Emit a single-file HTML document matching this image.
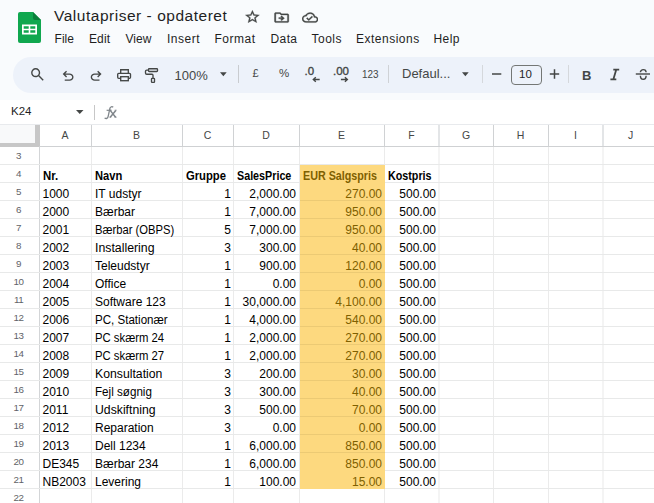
<!DOCTYPE html>
<html><head><meta charset="utf-8"><style>
*{margin:0;padding:0;box-sizing:border-box}
html,body{width:654px;height:503px;overflow:hidden;background:#f9fbfd;font-family:"Liberation Sans",sans-serif;position:relative}
.a{position:absolute;white-space:nowrap}
.t{position:absolute;white-space:nowrap;line-height:1}
.menu{font-size:12px;color:#1f1f1f;top:33px}
.ico{position:absolute}
.hl{position:absolute;height:1px}
.vl{position:absolute;width:1px}
.rn{position:absolute;font-size:9.8px;letter-spacing:-0.5px;color:#5f6368;width:37px;text-align:center;line-height:1}
.ch{position:absolute;font-size:10.5px;color:#444746;text-align:center;line-height:1}
.c{position:absolute;font-size:12px;color:#000;line-height:1}
.b{font-weight:bold;transform-origin:0 0}
.r{text-align:right}
</style></head><body>

<svg class="ico" style="left:18px;top:12px" width="23" height="31" viewBox="0 0 23 31">
<path d="M2 0H15L23 8V29A2 2 0 0 1 21 31H2A2 2 0 0 1 0 29V2A2 2 0 0 1 2 0Z" fill="#10a74f"/>
<path d="M15 0L23 8H17A2 2 0 0 1 15 6Z" fill="#0b7f3b"/>
<path d="M4 12.5H19V22.5H4Z M5.7 14.2V16.7H10.7V14.2Z M12.3 14.2V16.7H17.3V14.2Z M5.7 18.3V20.8H10.7V18.3Z M12.3 18.3V20.8H17.3V18.3Z" fill="#fff" fill-rule="evenodd"/>
</svg>
<div class="t" style="left:54px;top:7.5px;font-size:15.5px;letter-spacing:0.52px;color:#1f1f1f">Valutapriser - opdateret</div>
<div class="t menu" style="left:54.5px;letter-spacing:0.05px">File</div>
<div class="t menu" style="left:89px;letter-spacing:0.1px">Edit</div>
<div class="t menu" style="left:125.5px;letter-spacing:0.05px">View</div>
<div class="t menu" style="left:167px;letter-spacing:0.5px">Insert</div>
<div class="t menu" style="left:214.5px;letter-spacing:0.5px">Format</div>
<div class="t menu" style="left:270.5px;letter-spacing:0.4px">Data</div>
<div class="t menu" style="left:311.5px;letter-spacing:0.5px">Tools</div>
<div class="t menu" style="left:356px;letter-spacing:0.5px">Extensions</div>
<div class="t menu" style="left:433.5px;letter-spacing:0.4px">Help</div>
<div class="a" style="left:13px;top:57px;width:700px;height:36px;border-radius:18px;background:#edf2fa"></div>
<div class="a" style="left:0;top:100px;width:654px;height:403px;background:#fff"></div>
<div class="t" style="left:11px;top:106px;font-size:11.5px;color:#1f1f1f">K24</div>
<svg class="ico" style="left:76px;top:110px" width="8" height="5"><path d="M0 0H7.5L3.75 4Z" fill="#444746"/></svg>
<div class="a" style="left:93.5px;top:105px;width:1px;height:15px;background:#c7c7c7"></div>
<svg class="ico" style="left:0;top:100px" width="130" height="24" viewBox="0 100 130 24" fill="none" stroke="#80868b"><path d="M113.2 107.3C112.2 106.3 110.4 106.6 109.9 108.3L108.1 116.6C107.7 118.5 106.2 119 104.6 118" stroke-width="1.3"/><path d="M106.6 110.3H111.3" stroke-width="1.2"/><path d="M110.2 110.4L115.6 117.2M115.8 110.4L110.2 117.2" stroke-width="1.5"/><path d="M109.6 110.2H111.4M114.7 110.2H116.6M109.4 117.2H111.2M114.6 117.2H116.6" stroke-width="0.9"/></svg>
<div class="hl" style="left:0;top:124px;width:654px;background:#e8eaed"></div>
<div class="a" style="left:0;top:125px;width:35px;height:18px;background:#f8f9fa"></div>
<div class="a" style="left:35px;top:125px;width:5px;height:22px;background:#c7c7c7"></div>
<div class="a" style="left:0;top:143px;width:40px;height:4px;background:#c7c7c7"></div>
<div class="vl" style="left:91px;top:125px;height:21px;background:#d0d2d4"></div>
<div class="vl" style="left:91px;top:147px;height:356px;background:#ebebeb"></div>
<div class="vl" style="left:182px;top:125px;height:21px;background:#d0d2d4"></div>
<div class="vl" style="left:182px;top:147px;height:356px;background:#ebebeb"></div>
<div class="vl" style="left:233px;top:125px;height:21px;background:#d0d2d4"></div>
<div class="vl" style="left:233px;top:147px;height:356px;background:#ebebeb"></div>
<div class="vl" style="left:299px;top:125px;height:21px;background:#d0d2d4"></div>
<div class="vl" style="left:299px;top:147px;height:356px;background:#ebebeb"></div>
<div class="vl" style="left:384px;top:125px;height:21px;background:#d0d2d4"></div>
<div class="vl" style="left:384px;top:147px;height:356px;background:#ebebeb"></div>
<div class="a" style="left:438px;top:125px;width:2px;height:21px;background:#e3e5e7"></div>
<div class="a" style="left:438px;top:147px;width:2px;height:356px;background:#f4f4f4"></div>
<div class="vl" style="left:493px;top:125px;height:21px;background:#d0d2d4"></div>
<div class="vl" style="left:493px;top:147px;height:356px;background:#ebebeb"></div>
<div class="vl" style="left:548px;top:125px;height:21px;background:#d0d2d4"></div>
<div class="vl" style="left:548px;top:147px;height:356px;background:#ebebeb"></div>
<div class="a" style="left:602px;top:125px;width:2px;height:21px;background:#e3e5e7"></div>
<div class="a" style="left:602px;top:147px;width:2px;height:356px;background:#f4f4f4"></div>
<div class="vl" style="left:39px;top:147px;height:356px;background:#d3d5d7"></div>
<div class="hl" style="left:39px;top:146px;width:615px;background:#cfd1d3"></div>
<div class="hl" style="left:0;top:164px;width:654px;background:#e8e9e9"></div>
<div class="hl" style="left:0;top:182px;width:654px;background:#e8e9e9"></div>
<div class="hl" style="left:0;top:200px;width:654px;background:#e8e9e9"></div>
<div class="hl" style="left:0;top:218px;width:654px;background:#e8e9e9"></div>
<div class="hl" style="left:0;top:236px;width:654px;background:#e8e9e9"></div>
<div class="hl" style="left:0;top:254px;width:654px;background:#e8e9e9"></div>
<div class="hl" style="left:0;top:272px;width:654px;background:#e8e9e9"></div>
<div class="hl" style="left:0;top:290px;width:654px;background:#e8e9e9"></div>
<div class="hl" style="left:0;top:308px;width:654px;background:#e8e9e9"></div>
<div class="hl" style="left:0;top:326px;width:654px;background:#e8e9e9"></div>
<div class="hl" style="left:0;top:344px;width:654px;background:#e8e9e9"></div>
<div class="hl" style="left:0;top:362px;width:654px;background:#e8e9e9"></div>
<div class="hl" style="left:0;top:380px;width:654px;background:#e8e9e9"></div>
<div class="hl" style="left:0;top:398px;width:654px;background:#e8e9e9"></div>
<div class="hl" style="left:0;top:416px;width:654px;background:#e8e9e9"></div>
<div class="hl" style="left:0;top:434px;width:654px;background:#e8e9e9"></div>
<div class="hl" style="left:0;top:452px;width:654px;background:#e8e9e9"></div>
<div class="hl" style="left:0;top:470px;width:654px;background:#e8e9e9"></div>
<div class="hl" style="left:0;top:488px;width:654px;background:#e8e9e9"></div>
<div class="a" style="left:300px;top:165px;width:85px;height:324px;background:#fdd97f"></div>
<div class="hl" style="left:300px;top:200px;width:85px;background:#ecca74"></div>
<div class="hl" style="left:300px;top:218px;width:85px;background:#ecca74"></div>
<div class="hl" style="left:300px;top:236px;width:85px;background:#ecca74"></div>
<div class="hl" style="left:300px;top:254px;width:85px;background:#ecca74"></div>
<div class="hl" style="left:300px;top:272px;width:85px;background:#ecca74"></div>
<div class="hl" style="left:300px;top:290px;width:85px;background:#ecca74"></div>
<div class="hl" style="left:300px;top:308px;width:85px;background:#ecca74"></div>
<div class="hl" style="left:300px;top:326px;width:85px;background:#ecca74"></div>
<div class="hl" style="left:300px;top:344px;width:85px;background:#ecca74"></div>
<div class="hl" style="left:300px;top:362px;width:85px;background:#ecca74"></div>
<div class="hl" style="left:300px;top:380px;width:85px;background:#ecca74"></div>
<div class="hl" style="left:300px;top:398px;width:85px;background:#ecca74"></div>
<div class="hl" style="left:300px;top:416px;width:85px;background:#ecca74"></div>
<div class="hl" style="left:300px;top:434px;width:85px;background:#ecca74"></div>
<div class="hl" style="left:300px;top:452px;width:85px;background:#ecca74"></div>
<div class="ch" style="left:39px;width:52px;top:130.4px">A</div>
<div class="ch" style="left:91px;width:91px;top:130.4px">B</div>
<div class="ch" style="left:182px;width:51px;top:130.4px">C</div>
<div class="ch" style="left:233px;width:66px;top:130.4px">D</div>
<div class="ch" style="left:299px;width:85px;top:130.4px">E</div>
<div class="ch" style="left:384px;width:55px;top:130.4px">F</div>
<div class="ch" style="left:439px;width:54px;top:130.4px">G</div>
<div class="ch" style="left:493px;width:55px;top:130.4px">H</div>
<div class="ch" style="left:548px;width:55px;top:130.4px">I</div>
<div class="ch" style="left:603px;width:55px;top:130.4px">J</div>
<div class="rn" style="left:0px;top:151.3px">3</div>
<div class="rn" style="left:0px;top:169.3px">4</div>
<div class="rn" style="left:0px;top:187.3px">5</div>
<div class="rn" style="left:0px;top:205.3px">6</div>
<div class="rn" style="left:0px;top:223.3px">7</div>
<div class="rn" style="left:0px;top:241.3px">8</div>
<div class="rn" style="left:0px;top:259.3px">9</div>
<div class="rn" style="left:0px;top:277.3px">10</div>
<div class="rn" style="left:0px;top:295.3px">11</div>
<div class="rn" style="left:0px;top:313.3px">12</div>
<div class="rn" style="left:0px;top:331.3px">13</div>
<div class="rn" style="left:0px;top:349.3px">14</div>
<div class="rn" style="left:0px;top:367.3px">15</div>
<div class="rn" style="left:0px;top:385.3px">16</div>
<div class="rn" style="left:0px;top:403.3px">17</div>
<div class="rn" style="left:0px;top:421.3px">18</div>
<div class="rn" style="left:0px;top:439.3px">19</div>
<div class="rn" style="left:0px;top:457.3px">20</div>
<div class="rn" style="left:0px;top:475.3px">21</div>
<div class="rn" style="left:0px;top:493.3px">22</div>
<div class="c b" style="left:42.5px;top:169.8px;color:#000;transform:scaleX(0.95)">Nr.</div>
<div class="c b" style="left:95px;top:169.8px;color:#000;transform:scaleX(0.93)">Navn</div>
<div class="c b" style="left:185.5px;top:169.8px;color:#000;transform:scaleX(0.937)">Gruppe</div>
<div class="c b" style="left:236.5px;top:169.8px;color:#000;transform:scaleX(0.895)">SalesPrice</div>
<div class="c b" style="left:302.5px;top:169.8px;color:#7f6000;transform:scaleX(0.895)">EUR Salgspris</div>
<div class="c b" style="left:388px;top:169.8px;color:#000;transform:scaleX(0.895)">Kostpris</div>
<div class="c" style="left:42.5px;top:187.7px">1000</div>
<div class="c" style="left:95px;top:187.7px">IT udstyr</div>
<div class="c r" style="right:423px;top:187.7px;color:#000">1</div>
<div class="c r" style="right:358px;top:187.7px;color:#000">2,000.00</div>
<div class="c r" style="right:272px;top:187.7px;color:#7f6000">270.00</div>
<div class="c r" style="right:218px;top:187.7px;color:#000">500.00</div>
<div class="c" style="left:42.5px;top:205.7px">2000</div>
<div class="c" style="left:95px;top:205.7px">Bærbar</div>
<div class="c r" style="right:423px;top:205.7px;color:#000">1</div>
<div class="c r" style="right:358px;top:205.7px;color:#000">7,000.00</div>
<div class="c r" style="right:272px;top:205.7px;color:#7f6000">950.00</div>
<div class="c r" style="right:218px;top:205.7px;color:#000">500.00</div>
<div class="c" style="left:42.5px;top:223.7px">2001</div>
<div class="c" style="left:95px;top:223.7px;transform:scaleX(0.935);transform-origin:0 0">Bærbar (OBPS)</div>
<div class="c r" style="right:423px;top:223.7px;color:#000">5</div>
<div class="c r" style="right:358px;top:223.7px;color:#000">7,000.00</div>
<div class="c r" style="right:272px;top:223.7px;color:#7f6000">950.00</div>
<div class="c r" style="right:218px;top:223.7px;color:#000">500.00</div>
<div class="c" style="left:42.5px;top:241.7px">2002</div>
<div class="c" style="left:95px;top:241.7px;transform:scaleX(1.026);transform-origin:0 0">Installering</div>
<div class="c r" style="right:423px;top:241.7px;color:#000">3</div>
<div class="c r" style="right:358px;top:241.7px;color:#000">300.00</div>
<div class="c r" style="right:272px;top:241.7px;color:#7f6000">40.00</div>
<div class="c r" style="right:218px;top:241.7px;color:#000">500.00</div>
<div class="c" style="left:42.5px;top:259.7px">2003</div>
<div class="c" style="left:95px;top:259.7px">Teleudstyr</div>
<div class="c r" style="right:423px;top:259.7px;color:#000">1</div>
<div class="c r" style="right:358px;top:259.7px;color:#000">900.00</div>
<div class="c r" style="right:272px;top:259.7px;color:#7f6000">120.00</div>
<div class="c r" style="right:218px;top:259.7px;color:#000">500.00</div>
<div class="c" style="left:42.5px;top:277.7px">2004</div>
<div class="c" style="left:95px;top:277.7px">Office</div>
<div class="c r" style="right:423px;top:277.7px;color:#000">1</div>
<div class="c r" style="right:358px;top:277.7px;color:#000">0.00</div>
<div class="c r" style="right:272px;top:277.7px;color:#7f6000">0.00</div>
<div class="c r" style="right:218px;top:277.7px;color:#000">500.00</div>
<div class="c" style="left:42.5px;top:295.7px">2005</div>
<div class="c" style="left:95px;top:295.7px">Software 123</div>
<div class="c r" style="right:423px;top:295.7px;color:#000">1</div>
<div class="c r" style="right:358px;top:295.7px;color:#000">30,000.00</div>
<div class="c r" style="right:272px;top:295.7px;color:#7f6000">4,100.00</div>
<div class="c r" style="right:218px;top:295.7px;color:#000">500.00</div>
<div class="c" style="left:42.5px;top:313.7px">2006</div>
<div class="c" style="left:95px;top:313.7px;transform:scaleX(0.964);transform-origin:0 0">PC, Stationær</div>
<div class="c r" style="right:423px;top:313.7px;color:#000">1</div>
<div class="c r" style="right:358px;top:313.7px;color:#000">4,000.00</div>
<div class="c r" style="right:272px;top:313.7px;color:#7f6000">540.00</div>
<div class="c r" style="right:218px;top:313.7px;color:#000">500.00</div>
<div class="c" style="left:42.5px;top:331.7px">2007</div>
<div class="c" style="left:95px;top:331.7px;transform:scaleX(0.943);transform-origin:0 0">PC skærm 24</div>
<div class="c r" style="right:423px;top:331.7px;color:#000">1</div>
<div class="c r" style="right:358px;top:331.7px;color:#000">2,000.00</div>
<div class="c r" style="right:272px;top:331.7px;color:#7f6000">270.00</div>
<div class="c r" style="right:218px;top:331.7px;color:#000">500.00</div>
<div class="c" style="left:42.5px;top:349.7px">2008</div>
<div class="c" style="left:95px;top:349.7px;transform:scaleX(0.943);transform-origin:0 0">PC skærm 27</div>
<div class="c r" style="right:423px;top:349.7px;color:#000">1</div>
<div class="c r" style="right:358px;top:349.7px;color:#000">2,000.00</div>
<div class="c r" style="right:272px;top:349.7px;color:#7f6000">270.00</div>
<div class="c r" style="right:218px;top:349.7px;color:#000">500.00</div>
<div class="c" style="left:42.5px;top:367.7px">2009</div>
<div class="c" style="left:95px;top:367.7px;transform:scaleX(1.02);transform-origin:0 0">Konsultation</div>
<div class="c r" style="right:423px;top:367.7px;color:#000">3</div>
<div class="c r" style="right:358px;top:367.7px;color:#000">200.00</div>
<div class="c r" style="right:272px;top:367.7px;color:#7f6000">30.00</div>
<div class="c r" style="right:218px;top:367.7px;color:#000">500.00</div>
<div class="c" style="left:42.5px;top:385.7px">2010</div>
<div class="c" style="left:95px;top:385.7px;transform:scaleX(0.97);transform-origin:0 0">Fejl søgnig</div>
<div class="c r" style="right:423px;top:385.7px;color:#000">3</div>
<div class="c r" style="right:358px;top:385.7px;color:#000">300.00</div>
<div class="c r" style="right:272px;top:385.7px;color:#7f6000">40.00</div>
<div class="c r" style="right:218px;top:385.7px;color:#000">500.00</div>
<div class="c" style="left:42.5px;top:403.7px">2011</div>
<div class="c" style="left:95px;top:403.7px;transform:scaleX(1.02);transform-origin:0 0">Udskiftning</div>
<div class="c r" style="right:423px;top:403.7px;color:#000">3</div>
<div class="c r" style="right:358px;top:403.7px;color:#000">500.00</div>
<div class="c r" style="right:272px;top:403.7px;color:#7f6000">70.00</div>
<div class="c r" style="right:218px;top:403.7px;color:#000">500.00</div>
<div class="c" style="left:42.5px;top:421.7px">2012</div>
<div class="c" style="left:95px;top:421.7px">Reparation</div>
<div class="c r" style="right:423px;top:421.7px;color:#000">3</div>
<div class="c r" style="right:358px;top:421.7px;color:#000">0.00</div>
<div class="c r" style="right:272px;top:421.7px;color:#7f6000">0.00</div>
<div class="c r" style="right:218px;top:421.7px;color:#000">500.00</div>
<div class="c" style="left:42.5px;top:439.7px">2013</div>
<div class="c" style="left:95px;top:439.7px">Dell 1234</div>
<div class="c r" style="right:423px;top:439.7px;color:#000">1</div>
<div class="c r" style="right:358px;top:439.7px;color:#000">6,000.00</div>
<div class="c r" style="right:272px;top:439.7px;color:#7f6000">850.00</div>
<div class="c r" style="right:218px;top:439.7px;color:#000">500.00</div>
<div class="c" style="left:42.5px;top:457.7px">DE345</div>
<div class="c" style="left:95px;top:457.7px">Bærbar 234</div>
<div class="c r" style="right:423px;top:457.7px;color:#000">1</div>
<div class="c r" style="right:358px;top:457.7px;color:#000">6,000.00</div>
<div class="c r" style="right:272px;top:457.7px;color:#7f6000">850.00</div>
<div class="c r" style="right:218px;top:457.7px;color:#000">500.00</div>
<div class="c" style="left:42.5px;top:475.7px">NB2003</div>
<div class="c" style="left:95px;top:475.7px">Levering</div>
<div class="c r" style="right:423px;top:475.7px;color:#000">1</div>
<div class="c r" style="right:358px;top:475.7px;color:#000">100.00</div>
<div class="c r" style="right:272px;top:475.7px;color:#7f6000">15.00</div>
<div class="c r" style="right:218px;top:475.7px;color:#000">500.00</div>
<svg class="ico" style="left:28.60px;top:66.20px" width="16.80" height="16.80" viewBox="0 -960 960 960"><path d="M784-120 532-372q-30 24-69 38t-83 14q-109 0-184.5-75.5T120-580q0-109 75.5-184.5T380-840q109 0 184.5 75.5T640-580q0 44-14 83t-38 69l252 252-56 56ZM380-400q75 0 127.5-52.5T560-580q0-75-52.5-127.5T380-760q-75 0-127.5 52.5T200-580q0 75 52.5 127.5T380-400Z" fill="#444746"/></svg>
<svg class="ico" style="left:59.80px;top:67.72px" width="16.22" height="16.22" viewBox="0 -960 960 960"><path d="M280-200v-80h284q63 0 109.5-40T720-420q0-60-46.5-100T564-560H312l104 104-56 56-200-200 200-200 56 56-104 104h252q97 0 166.5 63T800-420q0 94-69.5 157T564-200H280Z" fill="#444746"/></svg>
<svg class="ico" style="left:87.70px;top:67.72px" width="16.22" height="16.22" viewBox="0 -960 960 960"><path d="M396-200q-97 0-166.5-63T160-420q0-94 69.5-157T396-640h252L544-744l56-56 200 200-200 200-56-56 104-104H396q-63 0-109.5 40T240-420q0 60 46.5 100T396-280h284v80H396Z" fill="#444746"/></svg>
<svg class="ico" style="left:0;top:0" width="654" height="100" viewBox="0 0 654 100" fill="none" stroke="#444746" stroke-width="1.35"><path d="M120.7 73V69.7H128.3V73"/><rect x="117.7" y="73.3" width="12.8" height="5" rx="1"/><rect x="120.7" y="76.7" width="7.6" height="4" fill="#edf2fa"/><rect x="148.5" y="68.7" width="9" height="2.8" rx="0.8"/><path d="M148.5 70.1H146.7A1.2 1.2 0 0 0 145.5 71.3V73A1.2 1.2 0 0 0 146.7 74.2H152A1 1 0 0 1 153 75.2V78.3"/><rect x="151.5" y="78.4" width="3" height="4" rx="0.6"/><path d="M319.7 79.5H313.5M315.8 77.2L313.3 79.5L315.8 81.8"/><path d="M340.9 79.5H347.2M344.9 77.2L347.4 79.5L344.9 81.8"/><path d="M492 74H501.3" stroke-width="1.5"/><path d="M549.8 74H559.2M554.5 69.3V78.7" stroke-width="1.5"/><path d="M635.8 74H650" stroke-width="1.4"/></svg>
<div class="a" style="left:238px;top:65px;width:1px;height:18px;background:#c9ccd0"></div>
<div class="a" style="left:388px;top:65px;width:1px;height:18px;background:#cfd2d6"></div>
<div class="a" style="left:482px;top:65px;width:1px;height:18px;background:#d5d8dc"></div>
<div class="a" style="left:568px;top:65px;width:1px;height:18px;background:#d5d8dc"></div>
<div class="t" style="left:174.5px;top:68.8px;font-size:13px;color:#444746">100%</div>
<svg class="ico" style="left:220px;top:72px" width="7" height="5"><path d="M0 0.2H6.7L3.35 4.2Z" fill="#444746"/></svg>
<div class="t" style="left:252.5px;top:67.7px;font-size:11px;color:#444746">£</div>
<div class="t" style="left:279px;top:67.8px;font-size:11.5px;color:#444746">%</div>
<div class="t" style="left:304.5px;top:66px;font-size:11.5px;color:#444746;-webkit-text-stroke:0.35px #444746">.0</div>
<div class="t" style="left:333px;top:66px;font-size:11.5px;color:#444746;-webkit-text-stroke:0.35px #444746">.00</div>
<div class="t" style="left:362px;top:68.6px;font-size:11px;color:#444746;transform:scaleX(0.9);transform-origin:0 0">123</div>
<div class="t" style="left:402px;top:66.8px;font-size:13px;color:#444746">Defaul...</div>
<svg class="ico" style="left:462px;top:72px" width="7" height="5"><path d="M0 0.2H6.7L3.35 4.2Z" fill="#444746"/></svg>
<div class="a" style="left:510.5px;top:64.5px;width:31px;height:20px;border:1px solid #747775;border-radius:4px"></div>
<div class="t" style="left:519px;top:69px;font-size:11.5px;color:#1f1f1f">10</div>
<div class="t" style="left:582px;top:68.6px;font-size:13px;font-weight:bold;color:#444746">B</div>
<svg class="ico" style="left:608px;top:68px" width="14" height="13"><path d="M5.3 1.7H11.2M2.4 11.3H8.3M8.2 1.7L5.4 11.3" stroke="#444746" stroke-width="1.8" fill="none"/></svg>
<svg class="ico" style="left:635px;top:68px" width="16" height="14"><path d="M5.4 4.3A2.85 2.7 0 0 1 11.1 4.3M5.4 7.7A2.85 3.5 0 0 0 11.1 7.7" stroke="#444746" stroke-width="1.4" fill="none"/></svg>
<svg class="ico" style="left:243.60px;top:8.90px" width="16.80" height="15.60" viewBox="0 0 24 24" preserveAspectRatio="none"><path d="M22 9.24l-7.19-.62L12 2 9.19 8.63 2 9.24l5.46 4.73L5.82 21 12 17.27 18.18 21l-1.63-7.03L22 9.24zM12 15.4l-3.76 2.27 1-4.28-3.32-2.88 4.38-.38L12 6.1l1.71 4.04 4.38.38-3.32 2.88 1 4.28L12 15.4z" fill="#444746" stroke="#444746" stroke-width="0.45"/></svg>
<svg class="ico" style="left:272.56px;top:9.98px" width="17.28" height="15.12" viewBox="0 0 24 24" preserveAspectRatio="none"><path d="M20 6h-8l-2-2H4c-1.11 0-1.99.89-1.99 2L2 18c0 1.11.89 2 2 2h16c1.11 0 2-.89 2-2V8c0-1.11-.89-2-2-2zm0 12H4V6h5.17l2 2H20v10zm-7.84-6H8v2h4.16l-1.59 1.59L11.99 17 16 13.01 11.99 9l-1.41 1.41L12.16 12z" fill="#444746" stroke="#444746" stroke-width="0.45"/></svg>
<svg class="ico" style="left:301.80px;top:9.98px" width="16.20" height="15.12" viewBox="0 0 24 24" preserveAspectRatio="none"><path d="M19.35 10.04C18.67 6.59 15.64 4 12 4 9.11 4 6.6 5.64 5.35 8.04 2.34 8.36 0 10.91 0 14c0 3.31 2.69 6 6 6h13c2.76 0 5-2.24 5-5 0-2.64-2.05-4.78-4.65-4.96zM19 18H6c-2.21 0-4-1.79-4-4 0-2.05 1.53-3.76 3.56-3.97l1.07-.11.5-.95C8.08 7.14 9.94 6 12 6c2.62 0 4.88 1.86 5.39 4.43l.3 1.5 1.53.11c1.56.1 2.78 1.41 2.78 2.96 0 1.65-1.35 3-3 3zm-9-3.82l-2.09-2.09L6.5 13.5 10 17l6.01-6.01-1.41-1.41z" fill="#444746" stroke="#444746" stroke-width="0.45"/></svg>
</body></html>
